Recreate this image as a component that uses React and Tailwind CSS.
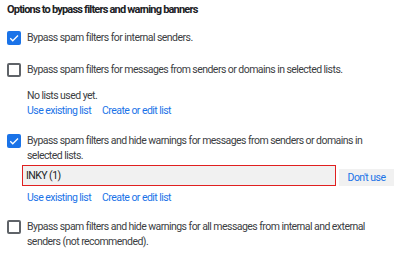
import React from 'react'

function Box({ checked }) {
    if (checked) {
        return (
            <div className="w-[14px] h-[14px] rounded-[2px] bg-[#1a73e8] flex items-center justify-center shrink-0">
                <svg width="12" height="12" viewBox="0 0 24 24">
                    <path d="M4.5 12.5l5 5L20 7" fill="none" stroke="white" strokeWidth="2.6" />
                </svg>
            </div>
        )
    }
    return <div className="w-[14px] h-[14px] rounded-[2px] border-2 border-[#5f6368] shrink-0" />
}

function Links() {
    return (
        <div className="flex gap-[11px] text-[#1a73e8] leading-[15px]">
            <span>Use existing list</span>
            <span>Create or edit list</span>
        </div>
    )
}

function Row({ checked, className, children }) {
    return (
        <div className={'flex gap-[6px] items-start ' + className}>
            <div className="mt-[1px]"><Box checked={checked} /></div>
            <div className="leading-[15px] w-[345px]">{children}</div>
        </div>
    )
}

export default function App() {
    return (
        <div className="w-[399px] h-[259px] bg-white text-[#3c4043] text-[10.5px] tracking-[-0.55px] font-['Roboto',sans-serif] pl-[7px] pt-[2px]">

            <div className="text-[#202124] text-[11px] font-bold tracking-[-0.8px] leading-[15px]">
                Options to bypass filters and warning banners
            </div>

            <Row checked className="mt-[13px]">
                Bypass spam filters for internal senders.
            </Row>

            <Row className="mt-[17px]">
                Bypass spam filters for messages from senders or domains in selected lists.
            </Row>

            <div className="pl-[20px] mt-[11px]">
                <div className="leading-[15px]">No lists used yet.</div>
                <Links />
            </div>

            <Row checked className="mt-[15px]">
                Bypass spam filters and hide warnings for messages from senders or domains in selected lists.
            </Row>

            <div className="pl-[15px] mt-[2px] flex items-end gap-[3px]">
                <div className="w-[314px] h-[21px] border border-[#e02020] bg-[#f1f1f1] px-[3px] flex items-center text-[#202124]">
                    INKY (1)
                </div>
                <div className="h-[17px] w-[55px] bg-[#f1f1f1] text-[#1a73e8] flex items-center justify-center">
                    Don't use
                </div>
            </div>

            <div className="pl-[20px] mt-[4px]">
                <Links />
            </div>

            <Row className="mt-[14px]">
                Bypass spam filters and hide warnings for all messages from internal and external senders (not recommended).
            </Row>

        </div>
    )
}
